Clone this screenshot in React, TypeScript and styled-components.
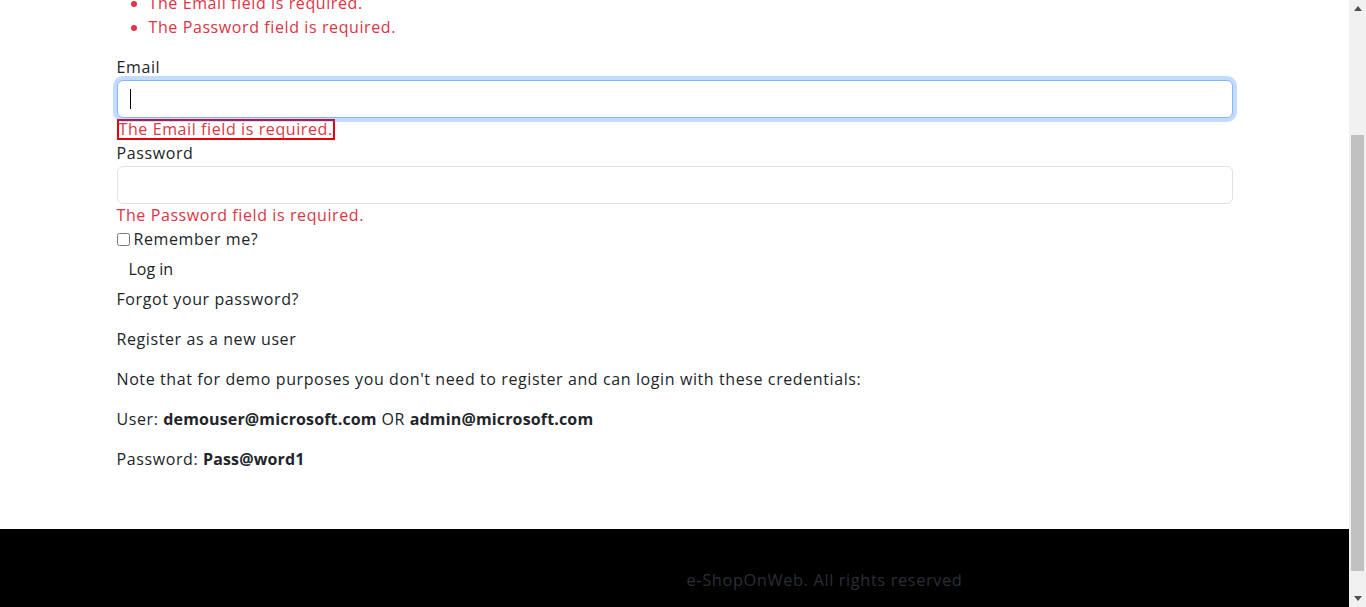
import React from 'react';
import styled, { createGlobalStyle } from 'styled-components';

const GlobalStyle = createGlobalStyle`
  * { box-sizing: border-box; }
  html, body { margin: 0; padding: 0; height: 100%; overflow: hidden; }
  body {
    font-family: "Open Sans", "Liberation Sans", sans-serif;
    font-size: 16px;
    line-height: 1.5;
    letter-spacing: 0.6px;
    color: #212529;
    background: #fff;
  }
  #root { height: 100%; }
`;

const Page = styled.div`
  display: flex;
  height: 100vh;
`;

const Viewport = styled.div`
  flex: 1;
  min-width: 0;
  display: flex;
  flex-direction: column;
  overflow: hidden;
`;

const Main = styled.main`
  flex: 1;
  overflow: hidden;
`;

const Container = styled.div`
  max-width: 1140px;
  margin: 0 auto;
  padding: 0 12px;
`;

const Summary = styled.ul`
  margin: -9px 0 16px;
  padding-left: 32px;
  color: #dc3545;
`;

const Label = styled.label`
  display: block;
  padding-bottom: 1px;
`;

const InputWrap = styled.div`
  position: relative;
`;

const Caret = styled.span`
  position: absolute;
  left: 13px;
  top: 9px;
  width: 1px;
  height: 20px;
  background: #000;
`;

const Input = styled.input<{ $focused?: boolean }>`
  display: block;
  width: 100%;
  height: 38px;
  padding: 6px 12px;
  font: inherit;
  color: #212529;
  background: #fff;
  border: 1px solid ${p => (p.$focused ? '#86b7fe' : '#dee2e6')};
  border-radius: 6px;
  outline: none;
  caret-color: transparent;
  box-shadow: ${p => (p.$focused ? '0 0 0 4px rgba(13, 110, 253, 0.25)' : 'none')};
`;

const ErrorLine = styled.div`
  height: 23px;
  color: #dc3545;
`;

const ErrorText = styled.span<{ $outlined?: boolean }>`
  display: inline-block;
  vertical-align: top;
  margin-top: 1px;
  line-height: 17px;
  border: 2px solid ${p => (p.$outlined ? '#e8000b' : 'transparent')};
  margin-left: ${p => (p.$outlined ? '0' : '-2px')};
`;

const CheckRow = styled.div`
  display: flex;
  align-items: center;
  height: 24px;
`;

const Check = styled.input`
  width: 13px;
  height: 13px;
  margin: 0 4px 0 0;
`;

const LoginButton = styled.button`
  display: block;
  padding: 6px 12px;
  font: inherit;
  line-height: 24px;
  color: #212529;
  background: transparent;
  border: 0;
`;

const Para = styled.p`
  margin: 0 0 16px;
`;

const Strong = styled.b`
  letter-spacing: 0.15px;
`;

const Footer = styled.footer`
  flex-shrink: 0;
  height: 78px;
  background: #000;
`;

const FooterRow = styled.div`
  display: grid;
  grid-template-columns: 1fr 1fr;
`;

const Copyright = styled.div`
  grid-column: 2;
  padding: 40px 12px 0;
  font-size: 16.4px;
  line-height: 22px;
  color: #2a2e35;
`;

const Scrollbar = styled.div`
  width: 17px;
  flex-shrink: 0;
  display: flex;
  flex-direction: column;
  background: #f1f1f1;
`;

const Arrow = styled.div`
  height: 17px;
  display: flex;
  align-items: center;
  justify-content: center;
`;

const Track = styled.div`
  flex: 1;
  padding: 118px 2px 19px;
  display: flex;
`;

const Thumb = styled.div`
  flex: 1;
  background: #c1c1c1;
`;

function App() {
  return (
    <Page>
      <GlobalStyle />
      <Viewport>
        <Main>
          <Container>
            <Summary>
              <li>The Email field is required.</li>
              <li>The Password field is required.</li>
            </Summary>
            <Label htmlFor="email">Email</Label>
            <InputWrap>
              <Input id="email" type="email" $focused />
              <Caret />
            </InputWrap>
            <ErrorLine>
              <ErrorText $outlined>The Email field is required.</ErrorText>
            </ErrorLine>
            <Label htmlFor="password">Password</Label>
            <Input id="password" type="password" />
            <ErrorLine>
              <ErrorText>The Password field is required.</ErrorText>
            </ErrorLine>
            <CheckRow>
              <Check type="checkbox" id="remember" />
              <label htmlFor="remember">Remember me?</label>
            </CheckRow>
            <LoginButton type="submit">Log in</LoginButton>
            <Para>Forgot your password?</Para>
            <Para>Register as a new user</Para>
            <Para>Note that for demo purposes you don't need to register and can login with these credentials:</Para>
            <Para>
              User: <Strong>demouser@microsoft.com</Strong> OR <Strong>admin@microsoft.com</Strong>
            </Para>
            <Para>
              Password: <Strong>Pass@word1</Strong>
            </Para>
          </Container>
        </Main>
        <Footer>
          <Container>
            <FooterRow>
              <Copyright>e-ShopOnWeb. All rights reserved</Copyright>
            </FooterRow>
          </Container>
        </Footer>
      </Viewport>
      <Scrollbar>
        <Arrow>
          <svg width="8" height="5" viewBox="0 0 8 5">
            <path d="M0 5 L4 0 L8 5 Z" fill="#505050" />
          </svg>
        </Arrow>
        <Track>
          <Thumb />
        </Track>
        <Arrow>
          <svg width="8" height="5" viewBox="0 0 8 5">
            <path d="M0 0 L8 0 L4 5 Z" fill="#505050" />
          </svg>
        </Arrow>
      </Scrollbar>
    </Page>
  );
}

export default App;
